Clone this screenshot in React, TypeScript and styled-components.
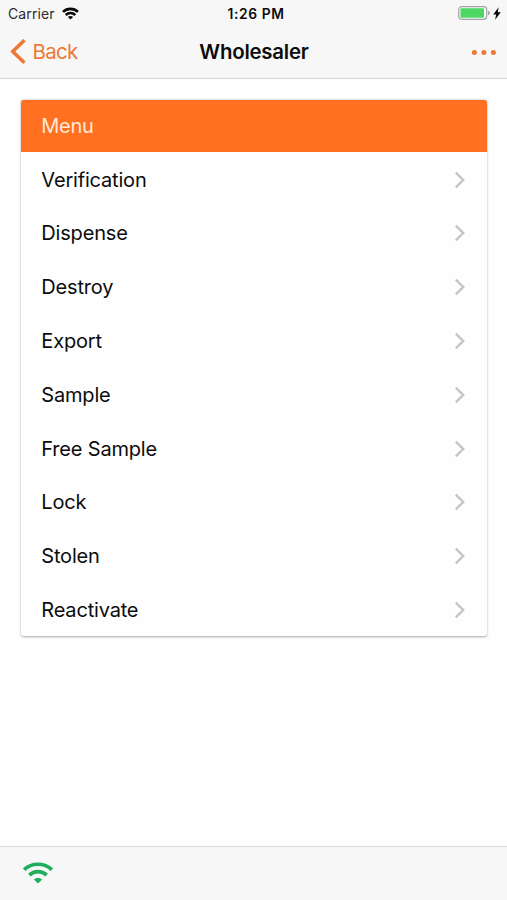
import React from "react";
import styled, { createGlobalStyle } from "styled-components";

const GlobalStyle = createGlobalStyle`
  * { box-sizing: border-box; }
  body {
    margin: 0;
    background: #fff;
    font-family: Inter, "Liberation Sans", sans-serif;
  }
`;

const Screen = styled.div`
  display: flex;
  flex-direction: column;
  width: 507px;
  height: 900px;
  overflow: hidden;
  background: #fefefe;
  color: #0c0c0c;
`;

const Header = styled.header`
  height: 79px;
  background: #f7f7f7;
  border-bottom: 1px solid #d8d8d8;
`;

const StatusBar = styled.div`
  display: grid;
  grid-template-columns: 1fr auto 1fr;
  align-items: center;
  height: 26px;
  padding: 0 6px 0 8px;
`;

const StatusGroup = styled.div<{ $end?: boolean }>`
  display: flex;
  align-items: center;
  justify-content: ${(p) => (p.$end ? "flex-end" : "flex-start")};
  gap: ${(p) => (p.$end ? "3px" : "7px")};
`;

const Carrier = styled.span`
  padding-top: 2px;
  font-size: 14px;
  line-height: 18px;
  letter-spacing: 0.1px;
  color: #2b2b2b;
`;

const Clock = styled.span`
  padding: 2px 0 0 3px;
  font-size: 13.8px;
  line-height: 18px;
  font-weight: 600;
  letter-spacing: 0.6px;
`;

const NavBar = styled.nav`
  display: grid;
  grid-template-columns: 1fr auto 1fr;
  align-items: center;
  height: 52px;
  padding: 0 11px 0 10px;
`;

const BackButton = styled.button`
  display: flex;
  align-items: center;
  gap: 5.5px;
  padding: 0;
  border: 0;
  background: none;
  color: #ec7938;
  font: 400 20.5px/26px Inter, sans-serif;
  letter-spacing: -0.7px;
`;

const Title = styled.h1`
  margin: 0;
  padding-left: 2px;
  font-size: 20.4px;
  line-height: 26px;
  font-weight: 600;
  letter-spacing: -0.22px;
`;

const MoreButton = styled.button`
  display: flex;
  justify-self: end;
  padding: 0;
  border: 0;
  background: none;
`;

const Content = styled.main`
  flex: 1;
  padding: 20.5px 20.5px 0 21.3px;
`;

const Card = styled.section`
  overflow: hidden;
  border-radius: 2.7px;
  background: #fefefe;
  box-shadow: 0 0.7px 2.4px rgba(0, 0, 0, 0.34);
`;

const CardHeader = styled.h2`
  display: flex;
  align-items: center;
  height: 52.8px;
  margin: 0;
  padding: 0 20px;
  background: #ff7020;
  color: #ffe9d6;
  font-size: 20px;
  font-weight: 400;
  letter-spacing: -0.3px;
`;

const MenuList = styled.ul`
  margin: 0;
  padding: 0;
  list-style: none;
`;

const MenuRow = styled.li`
  display: flex;
  align-items: center;
  justify-content: space-between;
  height: 53.78px;
  padding: 1px 20.5px 0 20px;
  font-size: 20px;
  line-height: 26px;
`;

const Label = styled.span`
  letter-spacing: -0.18px;
`;

const Footer = styled.footer`
  height: 54px;
  padding: 15px 0 0 23px;
  background: #f7f7f7;
  border-top: 1px solid #dcdcdc;
`;

const Svg = styled.svg`
  display: block;
`;

const StatusWifi = () => (
  <Svg width="17" height="13" viewBox="0 0 17 13" fill="none" stroke="#080808" strokeWidth="2.6">
    <path d="M1 4.9C5.2 .8 11.8 .8 16 4.9" />
    <path d="M3.7 8C6.4 5.4 10.6 5.4 13.3 8" />
    <path d="M8.5 12.5L5.9 10Q8.5 7.8 11.1 10Z" fill="#080808" stroke="none" />
  </Svg>
);

const Battery = () => (
  <Svg width="32" height="14" viewBox="0 0 32 14">
    <rect x=".7" y=".7" width="28" height="12.6" rx="3" fill="#fafafa" stroke="#a2a2a2" strokeWidth="1.2" />
    <rect x="2.5" y="2.3" width="23.5" height="9.4" rx="1.2" fill="#4dd864" />
    <path d="M30 4.7Q32 5.5 32 7T30 9.3Z" fill="#a2a2a2" />
  </Svg>
);

const Bolt = () => (
  <Svg width="8" height="13" viewBox="0 0 8 13">
    <path d="M5.6 .3L.3 7.4H3.2L2.1 12.7L7.8 5.3H4.8Z" fill="#080808" />
  </Svg>
);

const BackArrow = () => (
  <Svg width="17" height="26" viewBox="0 0 17 26">
    <path d="M14.4 1.2L2.8 12.5L14.4 23.8" fill="none" stroke="#ec7938" strokeWidth="3.6" />
  </Svg>
);

const MoreIcon = () => (
  <Svg width="25" height="6" viewBox="0 0 25 6" fill="#ec7938">
    <circle cx="3.4" cy="3.4" r="2.5" />
    <circle cx="12.9" cy="3.4" r="2.5" />
    <circle cx="22.4" cy="3.4" r="2.5" />
  </Svg>
);

const Chevron = () => (
  <Svg width="12" height="18" viewBox="0 0 12 18">
    <path d="M1.8 1.6L9.2 9L1.8 16.4" fill="none" stroke="#c5c5c5" strokeWidth="2.4" />
  </Svg>
);

const ConnectionIcon = () => (
  <Svg width="30" height="22" viewBox="0 0 30 22" fill="none" stroke="#20ad5c" strokeWidth="3.6">
    <path d="M1.2 7.7C8.6 .4 21.4 .4 28.8 7.7" />
    <path d="M6.4 13.1C11.2 8.4 18.8 8.4 23.6 13.1" />
    <path d="M15 21.5L10.9 17.6Q15 13.8 19.1 17.6Z" fill="#20ad5c" stroke="none" />
  </Svg>
);

const items = [
  "Verification",
  "Dispense",
  "Destroy",
  "Export",
  "Sample",
  "Free Sample",
  "Lock",
  "Stolen",
  "Reactivate",
];

export default function App() {
  return (
    <Screen>
      <GlobalStyle />
      <Header>
        <StatusBar>
          <StatusGroup>
            <Carrier>Carrier</Carrier>
            <StatusWifi />
          </StatusGroup>
          <Clock>1:26 PM</Clock>
          <StatusGroup $end>
            <Battery />
            <Bolt />
          </StatusGroup>
        </StatusBar>
        <NavBar>
          <BackButton>
            <BackArrow />
            Back
          </BackButton>
          <Title>Wholesaler</Title>
          <MoreButton aria-label="More">
            <MoreIcon />
          </MoreButton>
        </NavBar>
      </Header>
      <Content>
        <Card>
          <CardHeader>Menu</CardHeader>
          <MenuList>
            {items.map((label) => (
              <MenuRow key={label}>
                <Label>{label}</Label>
                <Chevron />
              </MenuRow>
            ))}
          </MenuList>
        </Card>
      </Content>
      <Footer>
        <ConnectionIcon />
      </Footer>
    </Screen>
  );
}
